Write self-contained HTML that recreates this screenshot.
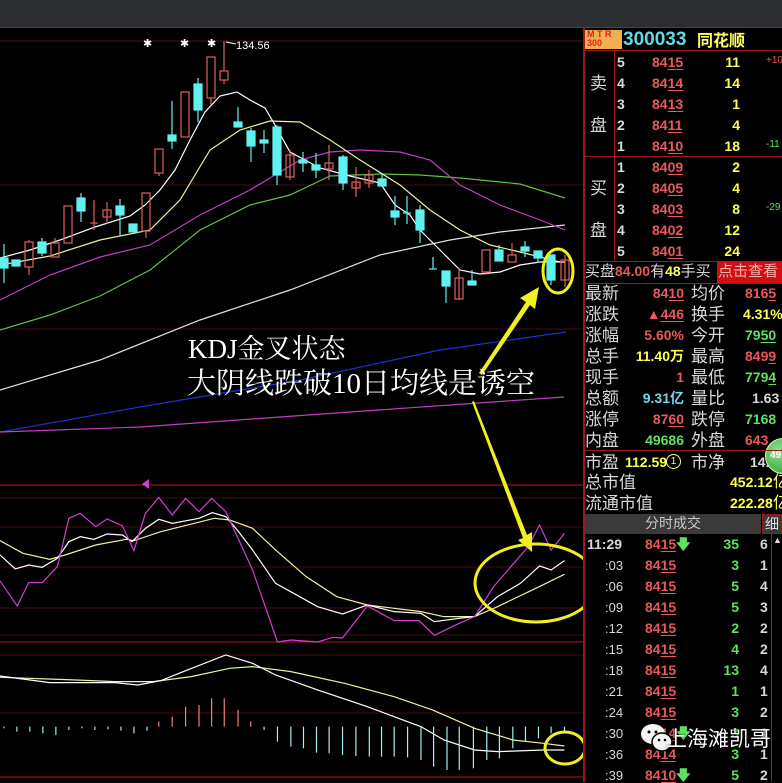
<!DOCTYPE html>
<html><head><meta charset="utf-8"><style>
*{margin:0;padding:0;box-sizing:border-box}
body{width:782px;height:782px;background:#000;overflow:hidden;position:relative;font-family:"Liberation Sans","Noto Sans CJK SC",sans-serif}
.a{position:absolute;white-space:nowrap;line-height:1}
.r{color:#e8585c}.y{color:#ffff50}.g{color:#5fe05f}.w{color:#d8d8d8}.c{color:#70d8f0}
.n{font-size:14px;font-weight:bold}
.l{font-size:17px;color:#d8d8d8}
u{text-decoration:underline;text-underline-offset:2px}
.rt{text-align:right}
</style></head><body>
<div class="a" style="left:0;top:0;width:782px;height:28px;background:#2c2e32;border-bottom:1px solid #444"></div>

<svg class="a" style="left:0;top:0" width="584" height="782" viewBox="0 0 584 782">
<g stroke-width="1">
<line x1="0" y1="41" x2="584" y2="41" stroke="#5a1010"/>
<line x1="0" y1="185" x2="584" y2="185" stroke="#4a0c0c"/>
<line x1="0" y1="329" x2="584" y2="329" stroke="#4a0c0c"/>
<line x1="0" y1="485" x2="584" y2="485" stroke="#b01818"/>
<line x1="0" y1="498" x2="584" y2="498" stroke="#4a0c0c"/>
<line x1="0" y1="527" x2="584" y2="527" stroke="#4a0c0c"/>
<line x1="0" y1="567" x2="584" y2="567" stroke="#4a0c0c"/>
<line x1="0" y1="608" x2="584" y2="608" stroke="#4a0c0c"/>
<line x1="0" y1="635" x2="584" y2="635" stroke="#4a0c0c"/>
<line x1="0" y1="642" x2="584" y2="642" stroke="#b01818"/>
<line x1="0" y1="655" x2="584" y2="655" stroke="#4a0c0c"/>
<line x1="0" y1="713" x2="584" y2="713" stroke="#4a0c0c"/>
<line x1="0" y1="777" x2="584" y2="777" stroke="#b01818"/>
</g>
<g fill="none" stroke-width="1.2">
<polyline stroke="#e0e0e0" points="0,390 100,360 200,320 290,290 380,255 450,240 500,232 565,225"/>
<polyline stroke="#2030d0" points="0,432 140,407 300,380 440,350 566,332"/>
<polyline stroke="#c040c0" points="0,432 140,427 350,412 564,397"/>
<polyline stroke="#60c040" points="0,330 50,315 100,296 150,270 200,230 250,205 290,195 330,176 380,174 420,175 460,178 520,184 565,198"/>
<polyline stroke="#c040c0" points="0,300 50,275 100,257 150,245 200,215 250,190 300,160 330,152 360,150 400,152 430,160 460,185 500,205 540,220 565,230"/>
<polyline stroke="#f0f0a0" points="0,265 50,256 100,240 150,230 180,200 210,150 240,130 270,121 300,122 330,140 360,160 400,185 430,210 460,230 490,245 520,252 560,262"/>
<polyline stroke="#ffffff" points="0,258 30,250 60,240 95,227 130,216 145,205 160,190 175,170 190,140 205,112 220,96 237,92 250,100 265,108 275,125 290,152 320,168 350,176 380,183 395,205 410,215 420,230 440,250 460,270 480,274 500,272 520,265 540,262 565,262"/>
</g>
<g stroke-width="1.2">
<g stroke="#60f0f0" fill="#60f0f0">
<line x1="4" y1="244" x2="4" y2="283"/><rect x="0" y="258" width="8" height="10"/>
<rect x="12" y="260" width="8" height="6"/>
<rect x="38" y="242" width="8" height="11"/><line x1="42" y1="238" x2="42" y2="256"/>
<rect x="77" y="198" width="8" height="13"/><line x1="81" y1="193" x2="81" y2="222"/>
<rect x="116" y="206" width="8" height="9"/><line x1="120" y1="199" x2="120" y2="236"/>
<rect x="129" y="224" width="8" height="8"/>
<rect x="168" y="135" width="8" height="6"/><line x1="172" y1="101" x2="172" y2="149"/>
<rect x="194" y="84" width="8" height="26"/><line x1="198" y1="78" x2="198" y2="122"/>
<rect x="234" y="122" width="8" height="5"/><line x1="238" y1="107" x2="238" y2="127"/>
<rect x="247" y="131" width="8" height="15"/><line x1="251" y1="128" x2="251" y2="162"/>
<rect x="260" y="140" width="8" height="3"/><line x1="264" y1="130" x2="264" y2="153"/>
<rect x="273" y="127" width="8" height="48"/><line x1="277" y1="125" x2="277" y2="185"/>
<rect x="299" y="160" width="8" height="3"/><line x1="303" y1="152" x2="303" y2="172"/>
<rect x="312" y="165" width="8" height="5"/><line x1="316" y1="153" x2="316" y2="178"/>
<rect x="339" y="157" width="8" height="26"/><line x1="343" y1="155" x2="343" y2="190"/>
<rect x="378" y="179" width="8" height="7"/><line x1="382" y1="173" x2="382" y2="186"/>
<rect x="391" y="211" width="8" height="6"/><line x1="395" y1="196" x2="395" y2="225"/>
<line x1="403" y1="213" x2="411" y2="213"/><line x1="407" y1="196" x2="407" y2="224"/>
<rect x="416" y="210" width="8" height="20"/><line x1="420" y1="205" x2="420" y2="243"/>
<line x1="429" y1="269" x2="437" y2="269"/><line x1="433" y1="257" x2="433" y2="269"/>
<rect x="442" y="271" width="8" height="15"/><line x1="446" y1="271" x2="446" y2="303"/>
<rect x="468" y="281" width="8" height="4"/><line x1="472" y1="270" x2="472" y2="285"/>
<rect x="495" y="250" width="8" height="11"/><line x1="499" y1="245" x2="499" y2="261"/>
<rect x="521" y="247" width="8" height="4"/><line x1="525" y1="241" x2="525" y2="257"/>
<rect x="534" y="251" width="8" height="7"/><line x1="538" y1="251" x2="538" y2="263"/>
<rect x="547" y="255" width="8" height="25"/><line x1="551" y1="255" x2="551" y2="285"/>
</g>
<g stroke="#e06060" fill="none">
<rect x="25" y="242" width="8" height="25"/><line x1="29" y1="240" x2="29" y2="242"/><line x1="29" y1="267" x2="29" y2="275"/>
<rect x="51" y="243" width="8" height="14"/><line x1="55" y1="238" x2="55" y2="243"/>
<rect x="64" y="206" width="8" height="37"/>
<line x1="90" y1="223" x2="98" y2="223"/><line x1="94" y1="200" x2="94" y2="230"/>
<rect x="103" y="210" width="8" height="7"/><line x1="107" y1="202" x2="107" y2="224"/>
<rect x="142" y="193" width="8" height="38"/><line x1="146" y1="231" x2="146" y2="238"/>
<rect x="155" y="149" width="8" height="24"/><line x1="159" y1="173" x2="159" y2="176"/>
<rect x="181" y="92" width="8" height="45"/>
<rect x="207" y="57" width="8" height="41"/><line x1="211" y1="98" x2="211" y2="105"/>
<rect x="220" y="71" width="8" height="9"/><line x1="224" y1="41" x2="224" y2="71"/><line x1="224" y1="80" x2="224" y2="84"/>
<rect x="286" y="155" width="8" height="22"/><line x1="290" y1="150" x2="290" y2="180"/>
<rect x="325" y="163" width="8" height="6"/><line x1="329" y1="145" x2="329" y2="180"/>
<rect x="352" y="182" width="8" height="6"/><line x1="356" y1="167" x2="356" y2="197"/>
<rect x="365" y="175" width="8" height="8"/><line x1="369" y1="170" x2="369" y2="188"/>
<rect x="455" y="278" width="8" height="21"/><line x1="459" y1="268" x2="459" y2="300"/>
<rect x="482" y="250" width="8" height="22"/><line x1="486" y1="272" x2="486" y2="275"/>
<rect x="508" y="255" width="8" height="7"/><line x1="512" y1="243" x2="512" y2="255"/>
<rect x="561" y="260" width="8" height="20"/><line x1="565" y1="255" x2="565" y2="287"/>
</g>
</g>
<g fill="#fff" font-size="11" font-family="Liberation Sans">
<text x="143" y="47">✱</text><text x="180" y="47">✱</text><text x="207" y="47">✱</text>
<text x="236" y="49" font-size="11">134.56</text>
<line x1="226" y1="42" x2="236" y2="44" stroke="#fff"/>
</g>
<g transform="translate(0,470) scale(0.3827,0.3333)" fill="none" stroke-width="1.2">
<polyline vector-effect="non-scaling-stroke" stroke="#f0f0a0" points="0,212 60,250 130,268 170,255 250,225 330,208 350,212 420,185 560,145 600,150 660,175 720,240 800,320 880,380 960,405 1100,425 1160,440 1240,440 1300,410 1400,355 1475,313"/>
<polyline vector-effect="non-scaling-stroke" stroke="#ffffff" points="0,255 40,297 75,285 110,292 150,265 180,215 210,200 245,208 280,192 320,195 345,215 380,175 415,148 450,160 520,145 555,128 590,140 620,180 660,240 720,340 830,410 895,432 960,405 1030,425 1100,430 1135,455 1200,445 1240,440 1300,380 1360,340 1410,288 1440,300 1475,272"/>
<polyline vector-effect="non-scaling-stroke" stroke="#d040d0" points="0,333 45,408 75,338 110,338 150,290 180,145 210,130 250,170 280,147 320,168 350,242 380,130 415,82 450,135 485,85 520,125 553,85 590,125 620,200 660,300 725,516 760,510 830,516 870,502 895,504 960,408 1030,452 1095,452 1135,496 1200,460 1240,440 1290,350 1380,230 1410,165 1440,240 1475,190"/>
<polyline vector-effect="non-scaling-stroke" stroke="#f0f0a0" points="0,622 200,630 300,635 400,635 500,620 600,595 660,590 760,605 900,640 1030,680 1130,720 1240,775 1340,810 1420,820 1475,828"/>
<polyline vector-effect="non-scaling-stroke" stroke="#ffffff" points="0,618 130,638 300,638 360,645 420,632 490,600 590,555 660,580 720,615 830,660 960,710 1030,740 1100,770 1160,810 1240,840 1300,845 1420,840 1475,840"/>
<g stroke="#f08080">
<line x1="415" y1="770" x2="415" y2="755" vector-effect="non-scaling-stroke"/><line x1="450" y1="770" x2="450" y2="740" vector-effect="non-scaling-stroke"/><line x1="485" y1="770" x2="485" y2="710" vector-effect="non-scaling-stroke"/><line x1="520" y1="770" x2="520" y2="705" vector-effect="non-scaling-stroke"/><line x1="553" y1="770" x2="553" y2="685" vector-effect="non-scaling-stroke"/><line x1="586" y1="770" x2="586" y2="685" vector-effect="non-scaling-stroke"/><line x1="622" y1="770" x2="622" y2="720" vector-effect="non-scaling-stroke"/><line x1="655" y1="770" x2="655" y2="755" vector-effect="non-scaling-stroke"/>
</g>
<g stroke="#a0f0f0">
<line x1="10" y1="770" x2="10" y2="775" vector-effect="non-scaling-stroke"/><line x1="44" y1="770" x2="44" y2="785" vector-effect="non-scaling-stroke"/><line x1="78" y1="770" x2="78" y2="785" vector-effect="non-scaling-stroke"/><line x1="112" y1="770" x2="112" y2="790" vector-effect="non-scaling-stroke"/><line x1="146" y1="770" x2="146" y2="795" vector-effect="non-scaling-stroke"/><line x1="180" y1="770" x2="180" y2="780" vector-effect="non-scaling-stroke"/><line x1="214" y1="770" x2="214" y2="775" vector-effect="non-scaling-stroke"/><line x1="248" y1="770" x2="248" y2="780" vector-effect="non-scaling-stroke"/><line x1="282" y1="770" x2="282" y2="778" vector-effect="non-scaling-stroke"/><line x1="316" y1="770" x2="316" y2="782" vector-effect="non-scaling-stroke"/><line x1="350" y1="770" x2="350" y2="790" vector-effect="non-scaling-stroke"/><line x1="384" y1="770" x2="384" y2="782" vector-effect="non-scaling-stroke"/>
<line x1="690" y1="770" x2="690" y2="780" vector-effect="non-scaling-stroke"/><line x1="725" y1="770" x2="725" y2="815" vector-effect="non-scaling-stroke"/><line x1="760" y1="770" x2="760" y2="830" vector-effect="non-scaling-stroke"/><line x1="793" y1="770" x2="793" y2="835" vector-effect="non-scaling-stroke"/><line x1="827" y1="770" x2="827" y2="848" vector-effect="non-scaling-stroke"/><line x1="860" y1="770" x2="860" y2="850" vector-effect="non-scaling-stroke"/><line x1="895" y1="770" x2="895" y2="855" vector-effect="non-scaling-stroke"/><line x1="930" y1="770" x2="930" y2="858" vector-effect="non-scaling-stroke"/><line x1="965" y1="770" x2="965" y2="860" vector-effect="non-scaling-stroke"/><line x1="997" y1="770" x2="997" y2="860" vector-effect="non-scaling-stroke"/><line x1="1030" y1="770" x2="1030" y2="860" vector-effect="non-scaling-stroke"/><line x1="1065" y1="770" x2="1065" y2="862" vector-effect="non-scaling-stroke"/><line x1="1100" y1="770" x2="1100" y2="870" vector-effect="non-scaling-stroke"/><line x1="1133" y1="770" x2="1133" y2="890" vector-effect="non-scaling-stroke"/><line x1="1168" y1="770" x2="1168" y2="900" vector-effect="non-scaling-stroke"/><line x1="1200" y1="770" x2="1200" y2="900" vector-effect="non-scaling-stroke"/><line x1="1237" y1="770" x2="1237" y2="895" vector-effect="non-scaling-stroke"/><line x1="1272" y1="770" x2="1272" y2="870" vector-effect="non-scaling-stroke"/><line x1="1305" y1="770" x2="1305" y2="865" vector-effect="non-scaling-stroke"/><line x1="1340" y1="770" x2="1340" y2="835" vector-effect="non-scaling-stroke"/><line x1="1373" y1="770" x2="1373" y2="815" vector-effect="non-scaling-stroke"/><line x1="1407" y1="770" x2="1407" y2="805" vector-effect="non-scaling-stroke"/><line x1="1440" y1="770" x2="1440" y2="790" vector-effect="non-scaling-stroke"/><line x1="1475" y1="770" x2="1475" y2="785" vector-effect="non-scaling-stroke"/>
</g>
</g>
<polygon points="142,484 149,479 149,489" fill="#d040d0"/>
<g fill="none" stroke="#f0f020" stroke-width="3">
<ellipse cx="558" cy="271" rx="15" ry="22"/>
<ellipse cx="536" cy="583" rx="61" ry="39"/>
<ellipse cx="565" cy="748" rx="20" ry="16"/>
</g>
<polygon fill="#f0f020" points="479,373 526,302 520,298 539,287 535,309 530,305 482,375"/>
<polygon fill="#f0f020" points="472,402 474,401 527,535 532,532 532,552 518,540 523,538"/>
</svg>

<div class="a" style="left:188px;top:336px;font-size:27px;color:#fff;font-family:'Liberation Serif','Noto Serif CJK SC',serif">KDJ金叉状态</div>
<div class="a" style="left:187px;top:370px;font-size:29px;color:#fff;font-family:'Liberation Serif','Noto Serif CJK SC',serif">大阴线跌破10日均线是诱空</div>

<div class="a" style="left:583px;top:28px;width:2px;height:754px;background:#a01818"></div>
<div class="a" style="left:585px;top:30px;width:37px;height:19px;background:#f0b050;color:#e02020;font-size:9px;font-weight:bold;line-height:9px;padding-left:2px">M T R<br>300</div>
<div class="a" style="left:623px;top:30px;font-size:19px;font-weight:bold;color:#60d8e8">300033</div>
<div class="a" style="left:697px;top:31px;font-size:16px;font-weight:bold;color:#ffff60;font-family:'Noto Sans CJK SC',sans-serif">同花顺</div>
<div class="a" style="left:585px;top:50px;width:197px;height:1px;background:#a01818"></div>
<div class="a" style="left:585px;top:156px;width:197px;height:1px;background:#a01818"></div>
<div class="a" style="left:585px;top:261px;width:197px;height:1px;background:#a01818"></div>
<div class="a" style="left:614px;top:50px;width:1px;height:211px;background:#a01818"></div>
<div class="a l" style="left:590px;top:75px">卖</div><div class="a l" style="left:590px;top:117px">盘</div>
<div class="a l" style="left:590px;top:180px">买</div><div class="a l" style="left:590px;top:222px">盘</div>

<div class="a n w" style="left:617px;top:55px">5</div><div class="a n r" style="left:652px;top:55px">84<u>15</u></div><div class="a n y rt" style="left:700px;width:40px;top:55px">11</div><div class="a r" style="left:766px;top:56px;font-size:10px">+10</div>
<div class="a n w" style="left:617px;top:76px">4</div><div class="a n r" style="left:652px;top:76px">84<u>14</u></div><div class="a n y rt" style="left:700px;width:40px;top:76px">14</div>
<div class="a n w" style="left:617px;top:97px">3</div><div class="a n r" style="left:652px;top:97px">84<u>13</u></div><div class="a n y rt" style="left:700px;width:40px;top:97px">1</div>
<div class="a n w" style="left:617px;top:118px">2</div><div class="a n r" style="left:652px;top:118px">84<u>11</u></div><div class="a n y rt" style="left:700px;width:40px;top:118px">4</div>
<div class="a n w" style="left:617px;top:139px">1</div><div class="a n r" style="left:652px;top:139px">84<u>10</u></div><div class="a n y rt" style="left:700px;width:40px;top:139px">18</div><div class="a g" style="left:766px;top:140px;font-size:10px">-11</div>
<div class="a n w" style="left:617px;top:160px">1</div><div class="a n r" style="left:652px;top:160px">84<u>09</u></div><div class="a n y rt" style="left:700px;width:40px;top:160px">2</div>
<div class="a n w" style="left:617px;top:181px">2</div><div class="a n r" style="left:652px;top:181px">84<u>05</u></div><div class="a n y rt" style="left:700px;width:40px;top:181px">4</div>
<div class="a n w" style="left:617px;top:202px">3</div><div class="a n r" style="left:652px;top:202px">84<u>03</u></div><div class="a n y rt" style="left:700px;width:40px;top:202px">8</div><div class="a g" style="left:766px;top:203px;font-size:10px">-29</div>
<div class="a n w" style="left:617px;top:223px">4</div><div class="a n r" style="left:652px;top:223px">84<u>02</u></div><div class="a n y rt" style="left:700px;width:40px;top:223px">12</div>
<div class="a n w" style="left:617px;top:244px">5</div><div class="a n r" style="left:652px;top:244px">84<u>01</u></div><div class="a n y rt" style="left:700px;width:40px;top:244px">24</div>

<div class="a" style="left:585px;top:264px;font-size:15px;color:#d8d8d8">买盘<span class="r" style="font-weight:bold;font-size:14px">84.00</span>有<span class="y" style="font-weight:bold;font-size:14px">48</span>手买</div>
<div class="a" style="left:717px;top:262px;width:65px;height:21px;background:#d01010;color:#ffb0b0;font-size:15px;padding:2px 0 0 1px">点击查看</div>
<div class="a" style="left:585px;top:283px;width:197px;height:1px;background:#a01818"></div>

<div class="a l" style="left:585px;top:285px">最新</div><div class="a n r rt" style="left:620px;width:64px;top:286px">84<u>10</u></div><div class="a l" style="left:691px;top:285px">均价</div><div class="a n r" style="left:745px;top:286px">816<u>5</u></div>
<div class="a l" style="left:585px;top:306px">涨跌</div><div class="a n r rt" style="left:620px;width:64px;top:307px">▲<u>446</u></div><div class="a l" style="left:691px;top:306px">换手</div><div class="a n y" style="left:743px;top:307px">4.31%</div>
<div class="a l" style="left:585px;top:327px">涨幅</div><div class="a n r rt" style="left:620px;width:64px;top:328px">5.60%</div><div class="a l" style="left:691px;top:327px">今开</div><div class="a n g" style="left:745px;top:328px">79<u>50</u></div>
<div class="a l" style="left:585px;top:348px">总手</div><div class="a n y rt" style="left:620px;width:64px;top:349px">11.40万</div><div class="a l" style="left:691px;top:348px">最高</div><div class="a n r" style="left:745px;top:349px">849<u>9</u></div>
<div class="a l" style="left:585px;top:369px">现手</div><div class="a n r rt" style="left:620px;width:64px;top:370px">1</div><div class="a l" style="left:691px;top:369px">最低</div><div class="a n g" style="left:745px;top:370px">779<u>4</u></div>
<div class="a l" style="left:585px;top:390px">总额</div><div class="a n c rt" style="left:620px;width:64px;top:391px">9.31亿</div><div class="a l" style="left:691px;top:390px">量比</div><div class="a n w" style="left:752px;top:391px">1.63</div>
<div class="a l" style="left:585px;top:411px">涨停</div><div class="a n r rt" style="left:620px;width:64px;top:412px">87<u>60</u></div><div class="a l" style="left:691px;top:411px">跌停</div><div class="a n g" style="left:745px;top:412px">7168</div>
<div class="a l" style="left:585px;top:432px">内盘</div><div class="a n g rt" style="left:620px;width:64px;top:433px">49686</div><div class="a l" style="left:691px;top:432px">外盘</div><div class="a n r" style="left:745px;top:433px">643</div>
<div class="a" style="left:765px;top:438px;width:36px;height:36px;border-radius:50%;background:radial-gradient(circle at 40% 35%,#90e090,#2a9a2a);border:1px solid #cfc"></div>
<div class="a" style="left:770px;top:451px;font-size:10px;color:#fff;font-weight:bold">49</div>
<div class="a" style="left:585px;top:450px;width:197px;height:1px;background:#a01818"></div>
<div class="a l" style="left:585px;top:454px">市盈</div><div class="a n y" style="left:625px;top:455px">112.59</div><div class="a" style="left:666px;top:454px;width:15px;height:15px;border:1px solid #ff6;border-radius:50%;color:#ff6;font-size:10px;text-align:center;line-height:13px">1</div><div class="a l" style="left:691px;top:454px">市净</div><div class="a n w" style="left:750px;top:455px">14.</div>
<div class="a l" style="left:585px;top:474px">总市值</div><div class="a n y" style="left:730px;top:475px">452.12<span style="font-weight:normal;font-size:16px">亿</span></div>
<div class="a l" style="left:585px;top:495px">流通市值</div><div class="a n y" style="left:730px;top:496px">222.28<span style="font-weight:normal;font-size:16px">亿</span></div>
<div class="a" style="left:585px;top:514px;width:176px;height:20px;background:#3a3a3a;color:#c8c8c8;font-size:14px;text-align:center;padding-top:2px">分时成交</div>
<div class="a" style="left:762px;top:514px;width:20px;height:20px;background:#3a3a3a;border:1px solid #a01818;color:#ddd;font-size:14px;padding:2px 0 0 2px">细</div>
<div class="a" style="left:771px;top:534px;width:1px;height:248px;background:#a01818"></div>
<div class="a" style="left:773px;top:536px;color:#ddd;font-size:9px">▲</div>

<div class="a n w" style="left:587px;top:537px">11:29</div>
<div class="a n r" style="left:645px;top:537px">84<u>15</u><span class="g">&#129095;</span></div><div class="a n g rt" style="left:700px;width:39px;top:537px">35</div><div class="a n w" style="left:760px;top:537px">6</div>
<div class="a w" style="left:605px;top:559px;font-size:13px">:03</div><div class="a n r" style="left:645px;top:558px">84<u>15</u></div><div class="a n g rt" style="left:700px;width:39px;top:558px">3</div><div class="a n w" style="left:760px;top:558px">1</div>
<div class="a w" style="left:605px;top:580px;font-size:13px">:06</div><div class="a n r" style="left:645px;top:579px">84<u>15</u></div><div class="a n g rt" style="left:700px;width:39px;top:579px">5</div><div class="a n w" style="left:760px;top:579px">4</div>
<div class="a w" style="left:605px;top:601px;font-size:13px">:09</div><div class="a n r" style="left:645px;top:600px">84<u>15</u></div><div class="a n g rt" style="left:700px;width:39px;top:600px">5</div><div class="a n w" style="left:760px;top:600px">3</div>
<div class="a w" style="left:605px;top:622px;font-size:13px">:12</div><div class="a n r" style="left:645px;top:621px">84<u>15</u></div><div class="a n g rt" style="left:700px;width:39px;top:621px">2</div><div class="a n w" style="left:760px;top:621px">2</div>
<div class="a w" style="left:605px;top:643px;font-size:13px">:15</div><div class="a n r" style="left:645px;top:642px">84<u>15</u></div><div class="a n g rt" style="left:700px;width:39px;top:642px">4</div><div class="a n w" style="left:760px;top:642px">2</div>
<div class="a w" style="left:605px;top:664px;font-size:13px">:18</div><div class="a n r" style="left:645px;top:663px">84<u>15</u></div><div class="a n g rt" style="left:700px;width:39px;top:663px">13</div><div class="a n w" style="left:760px;top:663px">4</div>
<div class="a w" style="left:605px;top:685px;font-size:13px">:21</div><div class="a n r" style="left:645px;top:684px">84<u>15</u></div><div class="a n g rt" style="left:700px;width:39px;top:684px">1</div><div class="a n w" style="left:760px;top:684px">1</div>
<div class="a w" style="left:605px;top:706px;font-size:13px">:24</div><div class="a n r" style="left:645px;top:705px">84<u>15</u></div><div class="a n g rt" style="left:700px;width:39px;top:705px">3</div><div class="a n w" style="left:760px;top:705px">2</div>
<div class="a w" style="left:605px;top:727px;font-size:13px">:30</div><div class="a n r" style="left:645px;top:726px">84<u>14</u><span class="g">&#129095;</span></div><div class="a n g rt" style="left:700px;width:39px;top:726px">3</div><div class="a n w" style="left:760px;top:726px">1</div>
<div class="a w" style="left:605px;top:748px;font-size:13px">:36</div><div class="a n r" style="left:645px;top:747px">84<u>14</u></div><div class="a n g rt" style="left:700px;width:39px;top:747px">3</div><div class="a n w" style="left:760px;top:747px">1</div>
<div class="a w" style="left:605px;top:769px;font-size:13px">:39</div><div class="a n r" style="left:645px;top:768px">84<u>10</u><span class="g">&#129095;</span></div><div class="a n g rt" style="left:700px;width:39px;top:768px">5</div><div class="a n w" style="left:760px;top:768px">2</div>

<svg class="a" style="left:640px;top:722px" width="34" height="32" viewBox="0 0 34 32">
<ellipse cx="13" cy="12" rx="12" ry="10" fill="#f4f4f4"/>
<ellipse cx="22" cy="20" rx="10" ry="9" fill="#f4f4f4" stroke="#000" stroke-width="1.5"/>
<circle cx="9" cy="10" r="1.5" fill="#000"/><circle cx="16" cy="10" r="1.5" fill="#000"/>
<circle cx="19" cy="18" r="1.3" fill="#000"/><circle cx="25" cy="18" r="1.3" fill="#000"/>
</svg>
<div class="a" style="left:666px;top:729px;font-size:21px;color:#fff;text-shadow:0 0 2px #000">上海滩凯哥</div>
</body></html>
